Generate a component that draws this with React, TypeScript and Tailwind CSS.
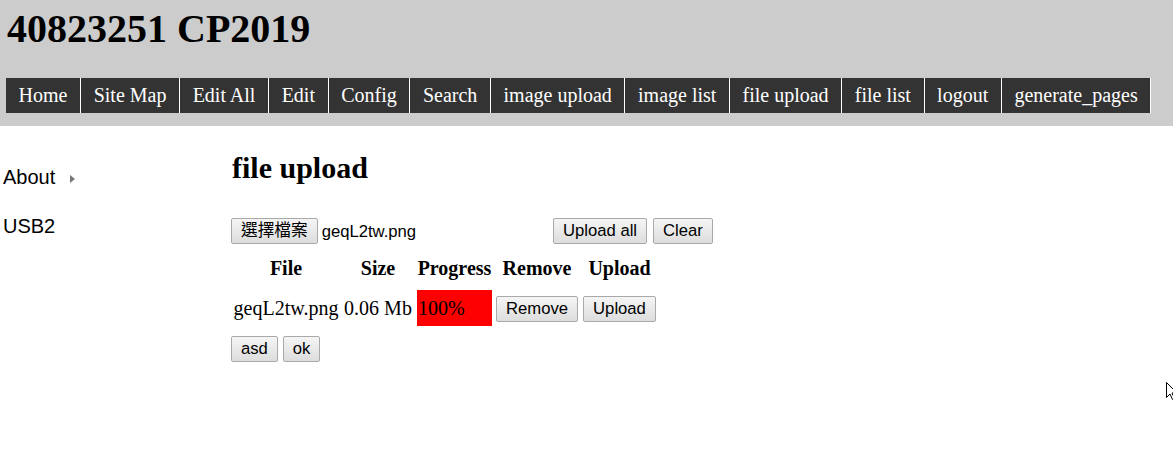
import type { ReactNode } from 'react';

const navItems = [
  'Home',
  'Site Map',
  'Edit All',
  'Edit',
  'Config',
  'Search',
  'image upload',
  'image list',
  'file upload',
  'file list',
  'logout',
  'generate_pages',
];

const serif = "font-['Liberation_Serif','Times_New_Roman',serif]";
const sans = "font-['Liberation_Sans',Arial,'Noto_Sans_CJK_TC',sans-serif]";

function Btn({ children, className = '' }: { children: ReactNode; className?: string }) {
  return (
    <button
      className={`h-[26px] px-[9px] text-[16.67px] leading-[20px] text-black ${sans} bg-gradient-to-b from-[#f5f5f5] to-[#dddddd] border border-[#a9a9a9] rounded-[2px] ${className}`}
    >
      {children}
    </button>
  );
}

export default function App() {
  return (
    <div className={`relative min-h-[454px] bg-white text-black ${serif}`}>
      {/* Header */}
      <header className="bg-[#cccccc] pt-[6px] pb-[13px]">
        <h1 className="pl-[7px] text-[40px] leading-[46px] font-bold">40823251 CP2019</h1>
        <nav className="mt-[26px] ml-[6px] flex">
          {navItems.map((item) => (
            <a
              key={item}
              className="block bg-[#333333] text-white text-[20px] leading-[35px] px-[12.6px] border-r border-white whitespace-nowrap"
            >
              {item}
            </a>
          ))}
        </nav>
      </header>

      <div className="flex">
        {/* Sidebar */}
        <aside className={`w-[232px] pl-[3px] pt-[39px] ${sans} text-[20px] leading-[24px]`}>
          <div className="flex items-center">
            <span>About</span>
            <span className="ml-[15px] mt-[3px] w-0 h-0 border-y-[4px] border-y-transparent border-l-[5px] border-l-[#777777]" />
          </div>
          <div className="mt-[24.6px]">USB2</div>
        </aside>

        {/* Main */}
        <main className="pt-[25px]">
          <h2 className="text-[30px] leading-[34px] font-bold">file upload</h2>

          <div className="mt-[33px] flex items-center">
            <div className="w-[322px] -ml-[1px] flex items-center">
              <Btn>選擇檔案</Btn>
              <span className={`ml-[4px] text-[16.67px] ${sans}`}>geqL2tw.png</span>
            </div>
            <Btn>Upload all</Btn>
            <Btn className="ml-[6px]">Clear</Btn>
          </div>

          {/* Table header */}
          <div className="mt-[13px] flex text-[20px] leading-[23px] font-bold">
            <div className="w-[108px] text-center">File</div>
            <div className="ml-[2px] w-[72px] text-center">Size</div>
            <div className="ml-[3px] w-[75px] text-center">Progress</div>
            <div className="ml-[4px] w-[82px] text-center">Remove</div>
            <div className="ml-[5px] w-[73px] text-center">Upload</div>
          </div>

          {/* Table row */}
          <div className="mt-[10px] flex items-center h-[36px] text-[20px] leading-[23px]">
            <div className="w-[108px] text-center">geqL2tw.png</div>
            <div className="ml-[2px] w-[72px] text-center">0.06 Mb</div>
            <div className="ml-[3px] w-[75px] h-full bg-[#ff0000] flex items-center pl-[1px]">100%</div>
            <Btn className="ml-[4px] mt-[2px] w-[82px]">Remove</Btn>
            <Btn className="ml-[5px] mt-[2px] w-[73px]">Upload</Btn>
          </div>

          <div className="mt-[10px] -ml-[1px] flex gap-[5px]">
            <Btn>asd</Btn>
            <Btn>ok</Btn>
          </div>
        </main>
      </div>

      {/* mouse cursor */}
      <svg className="absolute left-[1166px] top-[382px]" width="12" height="19" viewBox="0 0 12 19">
        <path d="M0.5 0.5 L0.5 15.5 L4 12 L6.5 17.5 L8.5 16.5 L6 11 L11 11 Z" fill="white" stroke="black" strokeWidth="1" />
      </svg>
    </div>
  );
}
